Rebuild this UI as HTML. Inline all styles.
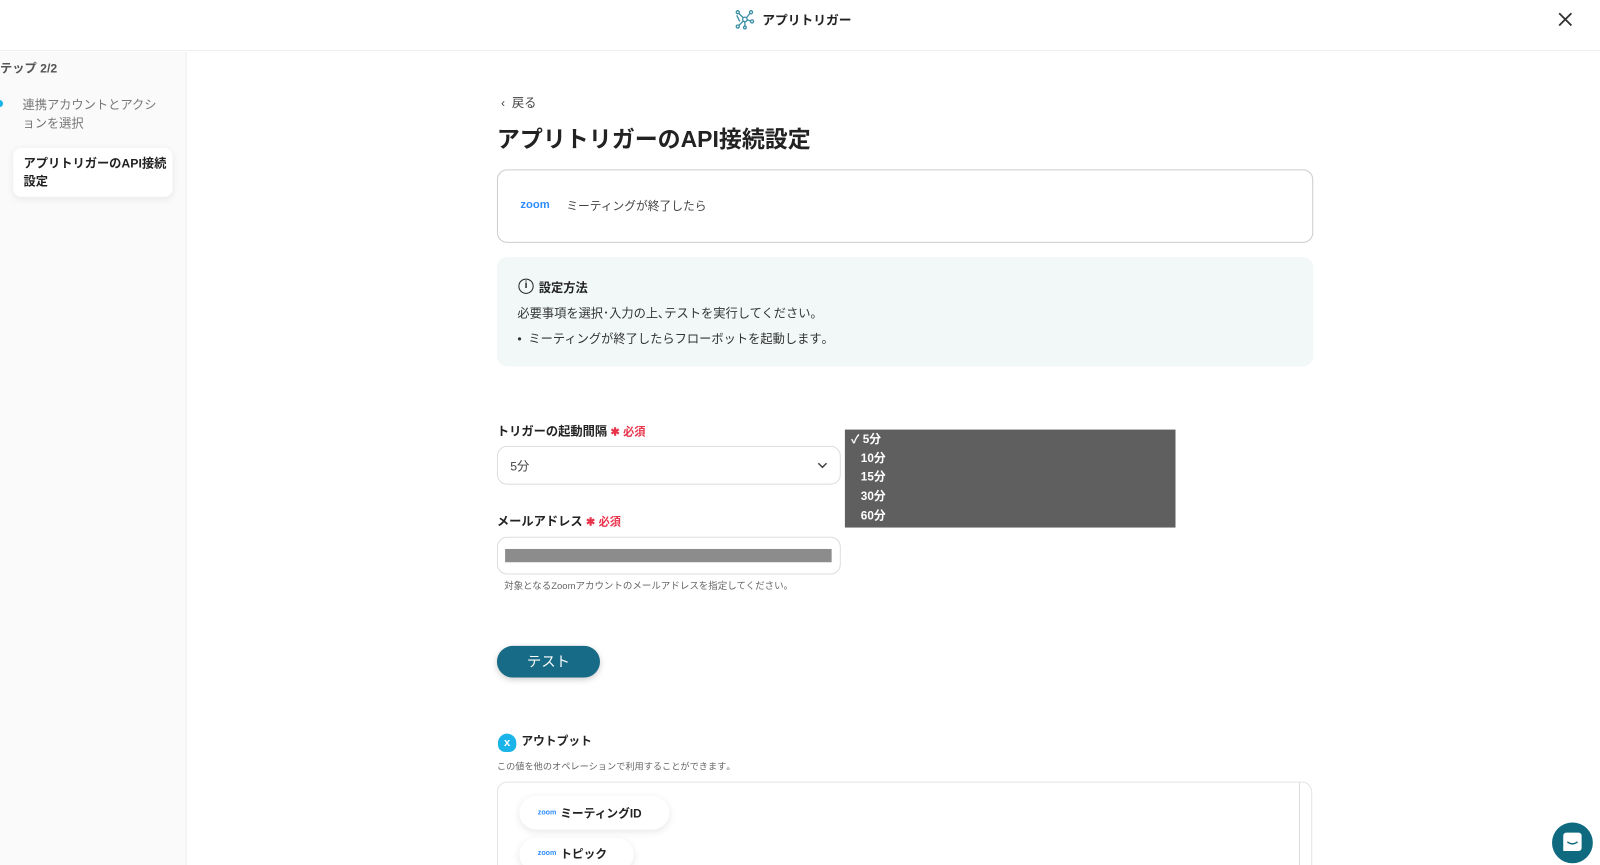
<!DOCTYPE html>
<html><head><meta charset="utf-8"><style>
*{box-sizing:border-box;margin:0;padding:0}
body{width:1600px;height:865px;overflow:hidden;background:#fff;font-family:"Liberation Sans","Noto Sans CJK JP",sans-serif;color:#222;position:relative}
#w{position:absolute;left:0;top:0;width:1568px;height:848px;transform:scale(1.0204);transform-origin:0 0;overflow:hidden}
.abs{position:absolute}
.hdr{left:0;top:0;width:1568px;height:50px;border-bottom:1px solid #eee;background:#fff}
.side{left:0;top:51px;width:183px;height:814px;background:#fafafa;border-right:1px solid #eee}
.zoom{color:#2D8CFF;font-weight:bold;font-family:"Liberation Sans",sans-serif}
.req{color:#e8334a;font-size:11px}
</style></head><body><div id="w">
<div class="abs hdr"></div>
<svg class="abs" style="left:720px;top:9px" width="20" height="20" viewBox="0 0 20 20" fill="none" stroke="#3a8fa6" stroke-width="1.3"><circle cx="10" cy="10" r="2.2"/><circle cx="3" cy="3" r="1.5"/><circle cx="16" cy="3" r="1.5"/><circle cx="3" cy="17" r="1.5"/><circle cx="17" cy="12" r="1.5"/><circle cx="10" cy="18" r="1.3"/><path d="M4 4l4.5 4.5M15 4l-3.5 4.5M4 16l4.5-4.5M15.5 11.5l-3.5-1M10 12v5M2 6l3 6"/></svg>
<div class="abs" style="left:747px;top:9px;font-size:12.5px;font-weight:bold;color:#222">アプリトリガー</div>
<svg class="abs" style="left:1526px;top:11px" width="16" height="16" viewBox="0 0 16 16" stroke="#333" stroke-width="1.8"><path d="M2 2l12 12M14 2L2 14"/></svg>
<div class="abs side"></div>
<div class="abs" style="left:0;top:58px;font-size:12px;font-weight:bold;color:#555">テップ 2/2</div>
<div class="abs" style="left:-4px;top:98px;width:7px;height:7px;border-radius:50%;background:#1ab4e8"></div>
<div class="abs" style="left:22px;top:94px;width:140px;font-size:12px;line-height:18px;color:#777">連携アカウントとアクションを選択</div>
<div class="abs" style="left:13px;top:145px;width:156px;height:48px;background:#fff;border-radius:8px;box-shadow:0 2px 8px rgba(0,0,0,.08)"></div>
<div class="abs" style="left:23px;top:151px;width:140px;font-size:12px;line-height:18px;font-weight:bold;color:#222">アプリトリガーのAPI接続設定</div>
<div class="abs" style="left:491px;top:92px;font-size:12px;color:#444">‹&nbsp; 戻る</div>
<div class="abs" style="left:487px;top:119px;font-size:22.5px;font-weight:bold;color:#222">アプリトリガーのAPI接続設定</div>
<div class="abs" style="left:487px;top:166px;width:800px;height:72px;border:1px solid #ccc;border-radius:10px"></div>
<div class="abs zoom" style="left:510px;top:195px;font-size:11px">zoom</div>
<div class="abs" style="left:555px;top:194px;font-size:11.5px;color:#444">ミーティングが終了したら</div>
<div class="abs" style="left:487px;top:252px;width:800px;height:107px;background:#f1f8f7;border-radius:10px"></div>
<div class="abs" style="left:508px;top:273px;width:15px;height:15px;border:1.5px solid #222;border-radius:50%;font-size:10px;font-weight:bold;text-align:center;line-height:12px">i</div>
<div class="abs" style="left:528px;top:273px;font-size:12px;font-weight:bold">設定方法</div>
<div class="abs" style="left:507px;top:298px;font-size:12px;color:#333">必要事項を選択･入力の上､テストを実行してください｡</div>
<div class="abs" style="left:507px;top:323px;font-size:12px;color:#333">•&nbsp; ミーティングが終了したらフローボットを起動します｡</div>
<div class="abs" style="left:487px;top:414px;font-size:12px;font-weight:bold">トリガーの起動間隔 <span class="req">✱ 必須</span></div>
<div class="abs" style="left:487px;top:437px;width:337px;height:38px;border:1px solid #ddd;border-radius:10px"></div>
<div class="abs" style="left:500px;top:448px;font-size:12px;color:#444">5分</div>
<svg class="abs" style="left:800px;top:452px" width="12" height="8" viewBox="0 0 12 8" fill="none" stroke="#444" stroke-width="1.5"><path d="M2 2l4 4 4-4"/></svg>
<div class="abs" style="left:828px;top:421px;width:324px;height:96px;background:#5f5f5f;color:#fff;font-size:11.5px;font-weight:bold;line-height:18.7px;padding:1px 0 0 6px">✓ 5分<br>&nbsp;&nbsp;&nbsp;10分<br>&nbsp;&nbsp;&nbsp;15分<br>&nbsp;&nbsp;&nbsp;30分<br>&nbsp;&nbsp;&nbsp;60分</div>
<div class="abs" style="left:487px;top:502px;font-size:12px;font-weight:bold">メールアドレス <span class="req">✱ 必須</span></div>
<div class="abs" style="left:487px;top:526px;width:337px;height:37px;border:1px solid #ddd;border-radius:10px"></div>
<div class="abs" style="left:495px;top:538px;width:320px;height:13px;background:#8c8c8c"></div>
<div class="abs" style="left:494px;top:566px;font-size:9.3px;color:#666">対象となるZoomアカウントのメールアドレスを指定してください｡</div>
<div class="abs" style="left:487px;top:633px;width:101px;height:31px;background:#176b87;border-radius:16px;color:#fff;font-size:14px;text-align:center;line-height:31px;box-shadow:0 2px 6px rgba(0,0,0,.2)">テスト</div>
<div class="abs" style="left:488px;top:719px;width:18px;height:18px;background:#1ab4e8;border-radius:50% 50% 40% 40%;color:#fff;font-size:11px;font-weight:bold;text-align:center;line-height:18px">x</div>
<div class="abs" style="left:511px;top:718px;font-size:11.5px;font-weight:bold">アウトプット</div>
<div class="abs" style="left:487px;top:744px;font-size:9px;color:#666">この値を他のオペレーションで利用することができます｡</div>
<div class="abs" style="left:487px;top:766px;width:799px;height:130px;border:1px solid #e3e3e3;border-radius:10px"></div>
<div class="abs" style="left:1273px;top:767px;width:1px;height:98px;background:#ddd"></div>
<div class="abs" style="left:509px;top:780px;width:147px;height:33px;background:#fff;border-radius:17px;box-shadow:0 2px 8px rgba(0,0,0,.1)"></div>
<div class="abs zoom" style="left:527px;top:793px;font-size:7px">zoom</div>
<div class="abs" style="left:549px;top:789px;font-size:11.5px;font-weight:bold">ミーティングID</div>
<div class="abs" style="left:509px;top:821px;width:112px;height:33px;background:#fff;border-radius:17px;box-shadow:0 2px 8px rgba(0,0,0,.1)"></div>
<div class="abs zoom" style="left:527px;top:833px;font-size:7px">zoom</div>
<div class="abs" style="left:549px;top:829px;font-size:11.5px;font-weight:bold">トピック</div>
<div class="abs" style="left:1521px;top:806px;width:40px;height:40px;border-radius:50%;background:#0f6a80"></div>
<div class="abs" style="left:1532px;top:816px;width:18px;height:18px;background:#fff;border-radius:3px 3px 3px 0"></div>
<svg class="abs" style="left:1535px;top:824px" width="12" height="6"><path d="M1 1q5 4 10 0" stroke="#0f6a80" fill="none" stroke-width="1.3"/></svg>
</div></body></html>
